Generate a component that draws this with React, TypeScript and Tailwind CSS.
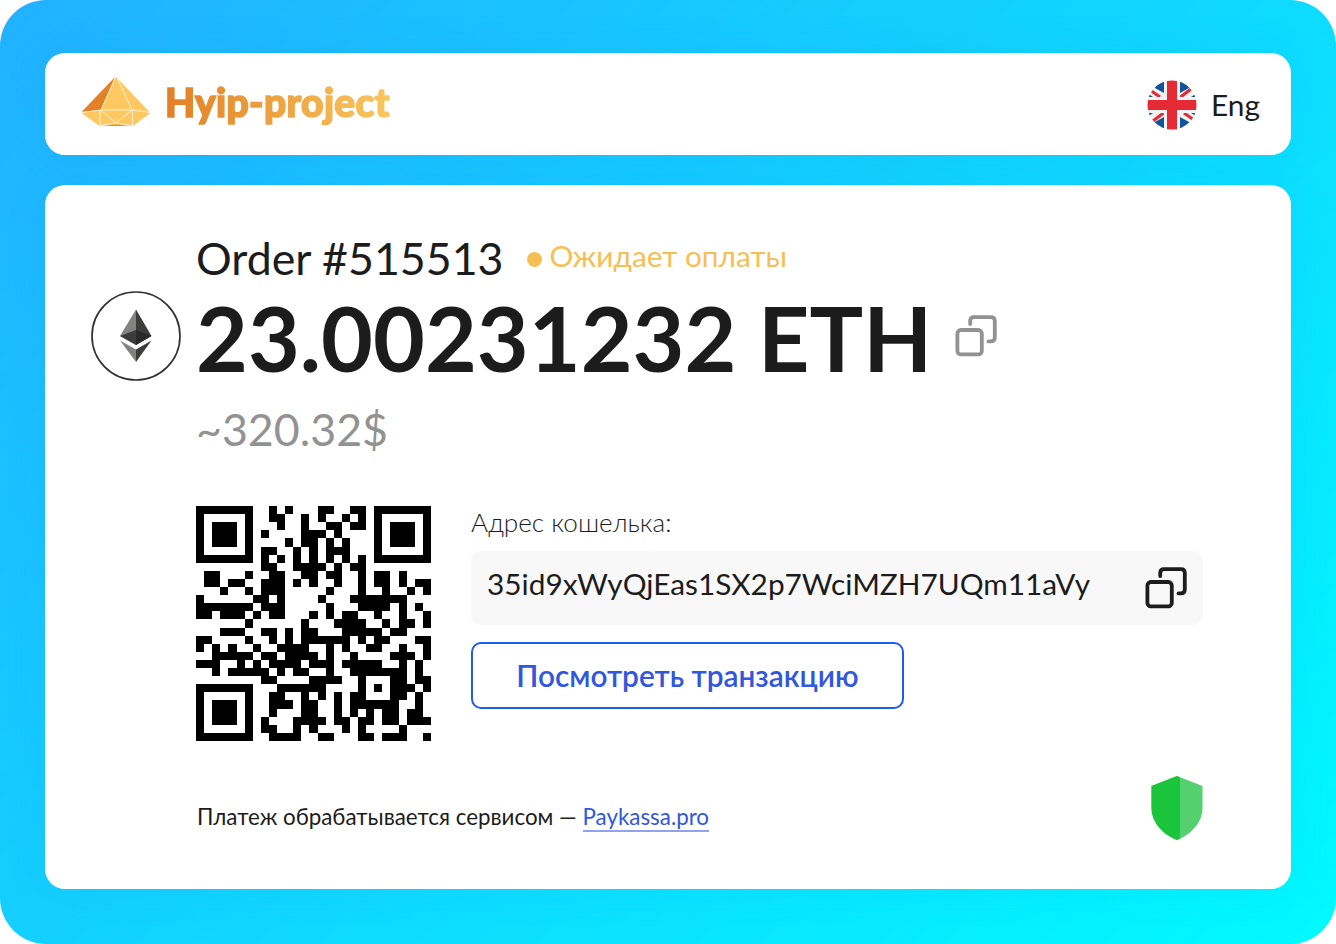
import { useState } from 'react'

// Dark data modules per row; the three corner markers are drawn separately
const QR_ROWS: number[][] = [
  [9, 11, 15, 16, 19, 20],
  [9, 10, 13, 15, 18, 20],
  [10, 13, 16, 17, 19, 20],
  [8, 13, 14, 15, 17],
  [11, 13, 14, 16, 18],
  [8, 9, 12, 14, 16, 17, 18],
  [8, 10, 12, 14, 16, 18, 20],
  [8, 9, 12, 13, 14, 15, 17, 19, 20],
  [1, 2, 6, 9, 10, 13, 14, 16, 17, 20, 22, 23, 25],
  [1, 2, 4, 5, 8, 9, 10, 12, 14, 17, 20, 22, 23, 25, 27, 28],
  [3, 6, 8, 9, 10, 16, 20, 23, 26, 28],
  [0, 7, 8, 10, 15, 19, 20, 21, 22, 23, 24, 25],
  [0, 1, 2, 3, 4, 5, 6, 8, 9, 10, 16, 20, 21, 22, 23, 25, 27],
  [0, 1, 3, 4, 5, 7, 9, 10, 14, 16, 18, 19, 22, 25, 28],
  [6, 13, 17, 18, 19, 20, 23, 25, 26, 28],
  [3, 4, 5, 8, 9, 11, 13, 14, 18, 19, 20, 21, 22, 24, 25],
  [0, 1, 6, 9, 11, 13, 14, 15, 16, 17, 18, 20, 22, 23, 27, 28],
  [0, 2, 4, 7, 10, 11, 12, 13, 16, 18, 21, 22, 25, 28],
  [2, 3, 4, 5, 6, 8, 9, 11, 12, 13, 14, 16, 19, 24, 25, 26, 28],
  [0, 1, 2, 5, 7, 9, 10, 11, 12, 14, 15, 16, 18, 19, 20, 21, 22, 25, 27],
  [2, 4, 5, 6, 7, 8, 10, 12, 13, 16, 19, 20, 21, 22, 23, 24, 25, 27],
  [8, 9, 14, 15, 16, 17, 20, 24, 25, 27, 28],
  [10, 11, 12, 13, 14, 15, 20, 22, 24, 25, 26, 28],
  [9, 10, 13, 15, 17, 19, 20, 24, 25, 27],
  [9, 10, 11, 13, 14, 17, 19, 20, 21, 22, 23, 24, 27],
  [9, 13, 14, 17, 19, 21, 23, 24, 26, 27],
  [8, 12, 13, 14, 15, 17, 18, 20, 21, 23, 24, 26, 27, 28],
  [8, 9, 12, 14, 18, 20, 25],
  [9, 10, 11, 12, 15, 16, 20, 21, 23, 24, 25, 28],
]

const QR_MARKERS = [
  [0, 0],
  [22, 0],
  [0, 22],
]

function QrCode() {
  const modules = QR_ROWS.map((cols, y) => cols.map((x) => `M${x} ${y}h1v1h-1z`).join('')).join('')
  const markers = QR_MARKERS.map(
    ([x, y]) => `M${x} ${y}h7v7h-7z M${x + 1} ${y + 1}v5h5v-5z M${x + 2} ${y + 2}h3v3h-3z`
  ).join('')

  return (
    <svg viewBox="0 0 29 29" className="h-[235px] w-[235px] shrink-0" shapeRendering="crispEdges">
      <path d={modules + markers} fill="#000" />
    </svg>
  )
}

function LogoMark() {
  return (
    <svg viewBox="0 0 70 50" className="mb-[4px] h-[50px] w-[70px]" strokeLinejoin="round">
      <path d="M35 0L69.500 36L52 49H18.500L.5 36z" fill="#fdc85f" />
      <path d="M34 0L.5 35L20 33z" fill="#e28127" />
      <path d="M24 48.800Q35 46 46 48.800z" fill="#e28127" />
      <path
        d="M34.500 0L20 33L.5 35.500M35.500 0L51 33L69.500 35.500M20 33H51M19 33V48.500M51.500 33V48.500M20 33.500L35 46L50.500 33.500M19 48.500L35 46L51.500 48.500"
        fill="none"
        stroke="#fff1d4"
        strokeWidth="1"
      />
    </svg>
  )
}

function UkFlag() {
  return (
    <svg viewBox="0 0 50 50" className="mt-[1px] h-[50px] w-[50px]">
      <clipPath id="flag">
        <circle cx="25" cy="25" r="24.500" />
      </clipPath>
      <g clipPath="url(#flag)">
        <path d="M0 0h50v50H0z" fill="#f3f3f3" />
        <path
          d="M7 7.500L17 0V13zM43 7.500L33 0V13zM7 42.500L17 50V37zM43 42.500L33 50V37zM0 13L6 17H0zM50 13L44 17H50zM0 37L6 33H0zM50 37L44 33H50z"
          fill="#0f559b"
        />
        <path d="M3 10L13 17M46 7.500L33.500 17M4 42.500L16.500 33M37 33L47 40" stroke="#e42a35" strokeWidth="3.200" />
        <path d="M25 0v50M0 25h50" stroke="#f3f3f3" strokeWidth="16" />
        <path d="M25 0v50M0 25h50" stroke="#e42a35" strokeWidth="10" />
      </g>
    </svg>
  )
}

function EthCoin() {
  return (
    <svg viewBox="0 0 90 90" className="h-[90px] w-[90px] shrink-0">
      <circle cx="45" cy="45" r="44" fill="#fff" stroke="#333" strokeWidth="1.700" />
      <path d="M45 18.500V54L29 45z" fill="#828282" />
      <path d="M45 18.500V54L60.500 45z" fill="#3c3c3b" />
      <path d="M45 39V54L29 45z" fill="#3c3c3b" />
      <path d="M45 39V54L60.500 45z" fill="#2a2a2a" />
      <path d="M45 58.500V71L29 49.500z" fill="#828282" />
      <path d="M45 58.500V71L60.500 49.500z" fill="#3c3c3b" />
    </svg>
  )
}

function CopyIcon({ className = '' }: { className?: string }) {
  return (
    <svg
      viewBox="0 0 42 42"
      className={`h-[42px] w-[42px] ${className}`}
      fill="none"
      stroke="currentColor"
      strokeWidth="3.800"
      strokeLinecap="round"
    >
      <rect x="2.400" y="15" width="24.400" height="24.400" rx="3.500" />
      <path d="M15.200 9V6Q15.200 2.200 19 2.200H36Q39.800 2.200 39.800 6V22.500Q39.800 26.400 36 26.400H33.500" />
    </svg>
  )
}

function Shield() {
  return (
    <svg viewBox="0 0 52 64" className="h-[64px] w-[52px]">
      <path d="M26 0L51.500 10V32C51.500 47 39 59 26 64C13 59 .5 47 .5 32V10z" fill="#55d071" />
      <path d="M26 0L29 1.200V62.600L26 64C13 59 .5 47 .5 32V10z" fill="#1ac43b" />
    </svg>
  )
}

function CopyButton({ value, className = '' }: { value: string; className?: string }) {
  return (
    <button type="button" aria-label="Copy" onClick={() => navigator.clipboard?.writeText(value)}>
      <CopyIcon className={className} />
    </button>
  )
}

export default function App() {
  const [address] = useState('35id9xWyQjEas1SX2p7WciMZH7UQm11aVy')

  return (
    <div className="h-[944px] w-[1336px] bg-white font-['Lato',sans-serif] text-[#1c1c1c]">
      <div className="flex h-full flex-col gap-[30px] rounded-[46px] bg-linear-135/srgb from-[#22b1ff] to-[#00faff] px-[45px] pt-[53px] pb-[55px]">
        <header className="flex h-[102px] items-center justify-between rounded-[20px] bg-white pr-[31px] pl-[36px] shadow-[0_0_45px_rgba(0,110,220,0.09)]">
          <div className="flex items-center gap-[14px]">
            <LogoMark />
            <span className="bg-linear-to-r/srgb from-[#e17f25] to-[#f9c75f] bg-clip-text pb-1 text-[39px] leading-[50px] font-black tracking-[0.3px] whitespace-nowrap text-transparent [-webkit-text-stroke:1.6px_transparent]">
              Hyip-project
            </span>
          </div>
          <div className="flex items-center gap-[14px]">
            <UkFlag />
            <span className="pt-[1px] text-[29.8px] leading-[36px]">Eng</span>
          </div>
        </header>

        <main className="flex flex-1 flex-col rounded-[20px] bg-white pt-[47px] pr-[88px] pl-[46px] shadow-[0_0_45px_rgba(0,110,220,0.09)]">
          <section className="flex gap-[15px]">
            <div className="pt-[59px]">
              <EthCoin />
            </div>
            <div>
              <div className="flex gap-[23px]">
                <h1 className="text-[44.7px] leading-[53px]">Order #515513</h1>
                <p className="flex items-center gap-[8px] pb-[5px] text-[29.8px] leading-[36px] text-[#f6be53]">
                  <span className="mt-[7px] h-[15px] w-[15px] rounded-full bg-[#f6be53]" />
                  Ожидает оплаты
                </p>
              </div>
              <div className="flex items-center gap-[23px]">
                <strong className="text-[89.5px] leading-[105px] font-bold whitespace-nowrap">23.00231232 ETH</strong>
                <CopyButton value="23.00231232" className="mb-[4px] text-[#929292]" />
              </div>
              <p className="pt-[12px] text-[44.7px] leading-[54px] text-[#929292]">~320.32$</p>
            </div>
          </section>

          <section className="mt-[50px] flex gap-[40px] pl-[105px]">
            <QrCode />
            <div className="flex-1">
              <p className="text-[26.1px] leading-[32px] font-light">Адрес кошелька:</p>
              <div className="mt-[13px] flex h-[74px] items-center justify-between rounded-[10px] bg-[#f8f8f8] pr-[16px] pl-[16px]">
                <span className="pb-[8px] text-[29.8px] leading-[36px]">{address}</span>
                <CopyButton value={address} />
              </div>
              <button
                type="button"
                className="mt-[17px] h-[67px] w-[433px] rounded-[10px] border-2 border-[#1c5cf0] pt-[2px] text-[29.8px] font-semibold text-[#3156e0]"
              >
                Посмотреть транзакцию
              </button>
            </div>
          </section>

          <footer className="mt-[35px] flex justify-between pl-[106px]">
            <p className="pt-[27px] text-[22.35px] leading-[28px]">
              Платеж обрабатывается сервисом —{' '}
              <a href="#" className="inline-block border-b-2 border-[#8fa3f0] leading-[26px] text-[#3156e0]">
                Paykassa.pro
              </a>
            </p>
            <Shield />
          </footer>
        </main>
      </div>
    </div>
  )
}
